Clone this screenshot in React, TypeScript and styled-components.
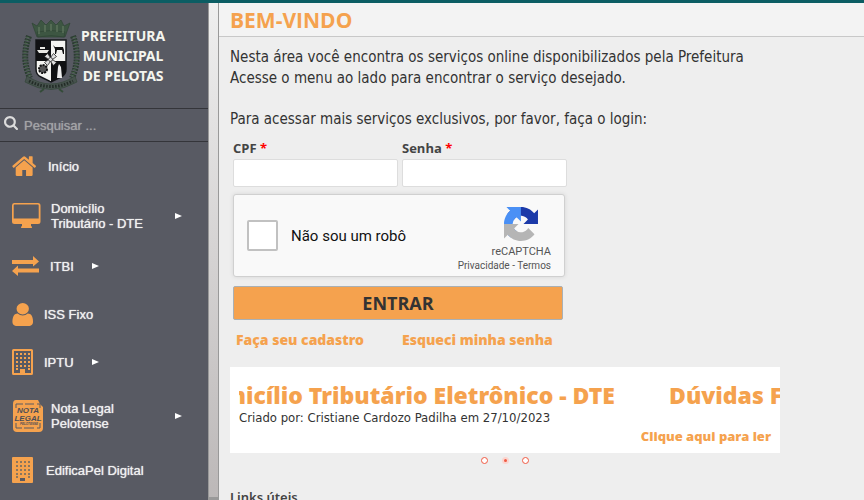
import React from "react";
import styled, { createGlobalStyle } from "styled-components";

const orange = "#f5a24e";
const slate = "#585a63";

const GlobalStyle = createGlobalStyle`
  * { box-sizing: border-box; }
  html, body, #root { height: 100%; }
  body {
    margin: 0;
    overflow: hidden;
    background: #eeeeee;
    color: #333333;
    font-family: "Open Sans", "Noto Sans", sans-serif;
  }
`;

const Page = styled.div`
  display: flex;
  height: 100vh;
  border-top: 3px solid #0b5d63;
`;

const Sidebar = styled.aside`
  flex: 0 0 208px;
  background: ${slate};
  font-family: "Liberation Sans", Arial, sans-serif;
  overflow: hidden;
`;

const Brand = styled.header`
  display: flex;
  height: 105px;
  padding: 16px 0 0 22px;
`;

const BrandName = styled.div`
  padding-top: 7px;
  color: #f4f5ee;
  font: 700 14px/20px "Noto Sans", "Open Sans", sans-serif;
  text-align: center;
`;

const Search = styled.label`
  display: flex;
  align-items: center;
  gap: 6px;
  height: 34px;
  padding-left: 4px;
  border-top: 1px solid #34353a;
  border-bottom: 1px solid #34353a;

  svg { margin-bottom: 5px; }
`;

const SearchInput = styled.input`
  width: 160px;
  padding: 0;
  border: 0;
  outline: 0;
  background: transparent;
  color: #ffffff;
  font: 13px "Liberation Sans", Arial, sans-serif;
  &::placeholder {
    color: #a2a3a6;
    opacity: 1;
    text-shadow: 0 0 1px #a2a3a6;
  }
`;

const Menu = styled.ul`
  margin: 0;
  padding: 0;
  list-style: none;
`;

const MenuLink = styled.a<{ $height: number }>`
  display: flex;
  align-items: center;
  height: ${(p) => p.$height}px;
  padding-left: 12px;
  color: #f0f0f0;
  font-size: 13px;
  line-height: 15px;
  text-decoration: none;
  text-shadow: 0 0 1px #f0f0f0;

  svg { flex: none; }
`;

const MenuText = styled.span<{ $wide?: boolean }>`
  width: ${(p) => (p.$wide ? "106px" : "auto")};
  margin: 0 18px 0 8px;
  white-space: pre-line;
`;

const Splitter = styled.div`
  flex: 0 0 11px;
  border: 1px solid #999999;
  border-width: 0 1px 3px;
  background: linear-gradient(#efefef, #bcb8b8);
`;

const Main = styled.main`
  flex: 1;
  min-width: 0;
  overflow: hidden;
`;

const TitleBar = styled.header`
  height: 34px;
  padding-left: 11px;
  border-bottom: 1px solid #c8c8c8;
  background: #f3f3f3;
`;

const Title = styled.h1`
  margin: 0;
  color: ${orange};
  font-size: 21px;
  font-weight: 700;
  line-height: 35px;
`;

const Content = styled.div`
  padding: 10px 11px 0;
`;

const Intro = styled.p`
  margin: 0 0 20px;
  font-family: "DejaVu Sans Condensed", "Noto Sans", sans-serif;
  font-size: 15px;
  line-height: 21px;
  &:nth-of-type(2) { margin-bottom: 8px; }
`;

const Form = styled.form`
  width: 334px;
  margin-left: 3px;
`;

const Fields = styled.div`
  display: grid;
  grid-template-columns: 165px 165px;
  gap: 4px;
`;

const Field = styled.label`
  font-size: 13px;
  font-weight: 700;
  line-height: 21px;
  color: #444444;
`;

const Required = styled.span`
  color: #ff0000;
`;

const TextInput = styled.input`
  display: block;
  width: 100%;
  height: 28px;
  border: 1px solid #dddddd;
  border-radius: 2px;
  background: #ffffff;
`;

const Captcha = styled.div`
  display: flex;
  justify-content: space-between;
  width: 332px;
  height: 83px;
  margin-top: 7px;
  padding: 0 13px;
  border: 1px solid #d0d0d0;
  border-radius: 3px;
  background: #f9f9f9;
  box-shadow: 0 0 4px rgba(0, 0, 0, 0.1);
  font-family: Roboto, sans-serif;
`;

const RobotLabel = styled.label`
  display: flex;
  align-items: center;
  gap: 13px;
  color: #111111;
  font-size: 15px;
`;

const Tick = styled.input`
  appearance: none;
  width: 31px;
  height: 31px;
  margin: 0;
  border: 2px solid #c1c1c1;
  border-radius: 2px;
  background: #ffffff;
`;

const CaptchaBrand = styled.div`
  display: flex;
  flex-direction: column;
  align-items: flex-end;
  padding-top: 12px;
  color: #555555;
  font-size: 11px;
  line-height: 14px;

  svg { margin: 0 13px 4px 0; }
`;

const CaptchaLinks = styled.div`
  font-size: 10px;
  line-height: 13px;
  a { color: inherit; text-decoration: none; }
`;

const Submit = styled.button`
  display: block;
  width: 330px;
  height: 34px;
  margin-top: 9px;
  padding: 0;
  border: 1px solid #a9b0b5;
  border-radius: 2px;
  background: ${orange};
  color: #333333;
  font: 700 18px "Open Sans", "Noto Sans", sans-serif;
`;

const AccountLinks = styled.nav`
  display: grid;
  grid-template-columns: 166px 166px;
  margin: 9px 0 16px 3px;
  font-size: 14px;
  line-height: 22px;
`;

const OrangeLink = styled.a`
  color: ${orange};
  font-family: "Noto Sans", "Open Sans", sans-serif;
  font-weight: 900;
  text-decoration: none;
  white-space: nowrap;
`;

const News = styled.section`
  width: 550px;
  height: 86px;
  padding: 14px 0 0 9px;
  background: #ffffff;
  overflow: hidden;
`;

const Ticker = styled.div`
  display: flex;
  gap: 54px;
  width: 541px;
  overflow: hidden;
`;

const Headline = styled.h2<{ $scrolled?: boolean }>`
  display: flex;
  flex: none;
  justify-content: flex-end;
  width: ${(p) => (p.$scrolled ? "376px" : "auto")};
  margin: 0;
  overflow: hidden;
  color: ${orange};
  font-family: "Noto Sans", "Open Sans", sans-serif;
  font-size: 23px;
  font-weight: 900;
  line-height: 29px;
  white-space: nowrap;
`;

const Byline = styled.p`
  margin: 0;
  font-family: "DejaVu Sans Condensed", "Noto Sans", sans-serif;
  font-size: 13px;
  line-height: 15px;
`;

const ReadMore = styled.div`
  padding-right: 9px;
  font-size: 13px;
  line-height: 22px;
  text-align: right;
`;

const Dots = styled.div`
  display: flex;
  justify-content: space-between;
  align-items: center;
  width: 48px;
  margin: 4px 0 0 251px;
`;

const Dot = styled.button<{ $active?: boolean }>`
  width: 7px;
  height: 7px;
  padding: 0;
  border: ${(p) => (p.$active ? "2px solid #fbd5cf" : "1px solid #f05a43")};
  border-radius: 50%;
  background: ${(p) => (p.$active ? "#f05a43" : "#ffffff")};
`;

const LinksTitle = styled.h3`
  margin: 23px 0 0;
  color: #444444;
  font-family: "Noto Sans", "Open Sans", sans-serif;
  font-size: 13px;
  font-weight: 600;
  line-height: 20px;
  white-space: nowrap;
`;

const Crest = () => (
  <svg width="59" height="74" viewBox="0 0 59 74" aria-label="Brasão de Pelotas">
    <g fill="#3d5642" stroke="#2f4535">
      <path strokeWidth=".7" d="M10 4l5 3 4-6 5 5 5-5 5 5 5-5 3 6 6-3-5 14H15z" />
      <path strokeWidth=".7" d="M15 13q14-3 28 0l-1 5q-13-3-26 0z" />
    </g>
    <path d="M17 8v7m6-9v7m6-8v7m6-6v7m6-6v7" stroke="#6c8069" fill="none" />
    <g fill="none" stroke="#2c3d32" strokeWidth="6" strokeDasharray="2 1">
      <path d="M7 17Q-1 39 8 59" />
      <path d="M51 17Q59 39 50 59" />
    </g>
    <path fill="none" stroke="#4c6850" strokeWidth="3" strokeDasharray="1 2" d="M6 18Q-1 39 8 58M52 18Q59 39 50 58" />
    <path d="M14 21h30v29q0 6-5 8l-10 5-10-5q-5-2-5-8z" fill="#f4f4f1" stroke="#15171a" strokeWidth="1.5" />
    <path d="M14 21h15v21H14zM29 42h15v8q0 6-5 8l-10 5z" fill="#101113" />
    <path d="M15 31h12l-2 3h-8zM18 30v-2h5v2z" fill="#e8e8e3" />
    <path d="M31 26l2 2h8l1 3v4h-1l-1-4h-5l-1 4h-1v-5z" fill="#111" />
    <circle cx="21" cy="50" r="4" fill="#555" stroke="#111" strokeWidth="2" strokeDasharray="2 1" />
    <path d="M37 45l2 3 1 11h-5l1-11z" fill="#eee" />
    <g transform="translate(28.5 40.5)" stroke="#222" strokeWidth=".8" fill="#ddd">
      <path d="M-6-3l3-3 3 4 3-4 3 3-4 3 4 3-3 3-3-4-3 4-3-3 4-3z" />
      <circle r="2" />
    </g>
    <path d="M5 57q24 16 48 0l2 6q-26 15-52 0z" fill="#46524d" stroke="#34463a" strokeWidth=".7" />
    <path d="M7 62q22 11 44 0" fill="none" stroke="#222b26" strokeDasharray="1.5 1.5" strokeWidth="3" />
    <path d="M22 70l-4 3m19-3l4 3" stroke="#344b38" strokeWidth="2" />
  </svg>
);

const SearchIcon = () => (
  <svg width="14" height="14" viewBox="64 128 1664 1664" fill="#dcdcdc" aria-hidden="true">
    <path d="M1216 832q0-185-131.500-316.500t-316.500-131.500-316.500 131.500-131.500 316.500 131.500 316.500 316.500 131.500 316.500-131.500 131.500-316.500zm512 832q0 52-38 90t-90 38q-54 0-90-38l-343-342q-179 124-399 124-143 0-273.500-55.500t-225-150-150-225-55.500-273.500 55.500-273.500 150-225 225-150 273.500-55.500 273.500 55.500 225 150 150 225 55.500 273.500q0 220-124 399l343 343q37 37 37 90z" />
  </svg>
);

const HomeIcon = () => (
  <svg width="28" height="20" viewBox="0 0 28 20" fill={orange} aria-hidden="true">
    <path transform="translate(-1 -3.600) scale(.0147 .0153)" d="M1472 992v480q0 26-19 45t-45 19h-384v-384h-256v384h-384q-26 0-45-19t-19-45v-480q0-1 .5-3t.5-3l575-474 575 474q1 2 1 6zm223-69l-62 74q-8 9-21 11h-3q-13 0-21-7l-692-577-692 577q-12 8-24 7-13-2-21-11l-62-74q-8-10-7-23.500t11-21.500l719-599q32-26 76-26t76 26l244 204v-195q0-14 9-23t23-9h192q14 0 23 9t9 23v408l219 182q10 8 11 21.500t-7 23.500z" />
  </svg>
);

const DesktopIcon = () => (
  <svg width="31" height="26" viewBox="0 0 31 26" fill={orange} aria-hidden="true">
    <path fillRule="evenodd" d="M2 0h24q2.500 0 2.500 2.500v16q0 2.500-2.500 2.500h-7v2q1 0 1 2H9q0-2 1-2v-2H2.500Q0 21 0 18.500v-16Q0 0 2 0zm.5 1.500q-.8 0-.8 1V15.500h25V2.500q0-1-1-1z" />
  </svg>
);

const ExchangeIcon = () => (
  <svg width="30" height="20" viewBox="0 0 30 20" fill={orange} aria-hidden="true">
    <path d="M0 4h21V0l6 5.500-6 5V8H0zM27 12.500H6V9.500L0 15l6 5v-3.500h21z" />
  </svg>
);

const UserIcon = () => (
  <svg width="24" height="23" viewBox="0 0 24 23" fill={orange} aria-hidden="true">
    <path transform="translate(-3.700 -1.900) scale(.0161 .0149)" d="M1536 1399q0 109-62.500 187t-150.500 78h-854q-88 0-150.500-78t-62.500-187q0-85 8.500-160.500t31.500-152 58.500-131 94-89 134.500-34.500q131 128 313 128t313-128q76 0 134.500 34.500t94 89 58.500 131 31.500 152 8.500 160.500zm-256-887q0 159-112.500 271.500t-271.500 112.500-271.500-112.500-112.500-271.500 112.500-271.500 271.500-112.500 271.500 112.500 112.500 271.500z" />
  </svg>
);

const windows = [4, 8, 12, 16]
  .flatMap((x) => [4, 8, 12, 16, 19].map((y) => [x, y]))
  .filter(([x, y]) => y < 19 || x === 4 || x === 16);

const BuildingOutlineIcon = () => (
  <svg width="24" height="26" viewBox="0 0 24 26" aria-hidden="true">
    <rect x="1" y="1" width="19" height="24" rx=".5" fill="none" stroke={orange} strokeWidth="2" />
    {windows.map(([x, y]) => (
      <rect key={`${x}-${y}`} x={x} y={y} width="2" height="2" fill={orange} />
    ))}
    <path d="M8 20h5v5H8z" fill={orange} />
  </svg>
);

const BuildingSolidIcon = () => (
  <svg width="26" height="26" viewBox="0 0 26 26" aria-hidden="true">
    <rect width="21" height="26" rx="1" fill={orange} />
    {windows.map(([x, y]) => (
      <rect key={`${x}-${y}`} x={x} y={y} width="2" height="2" fill="#8b765f" />
    ))}
    <path d="M8 21h5v3H8z" fill={slate} />
  </svg>
);

const NotaLegalIcon = () => (
  <svg width="31" height="32" viewBox="0 0 31 32" aria-hidden="true">
    <path d="M4 0h22l2 4 3 3v21q0 4-4 4H5q-4 0-4-4V4q0-4 3-4z" fill={orange} />
    <path d="M4 8V4h7m2 0h9m3 0h3v4M4 23v5h6m2 0h10m3 0h3v-5" fill="none" stroke={slate} strokeWidth="1" />
    <g fill="#4d4e55" fontFamily="Liberation Sans" fontWeight="700" fontStyle="italic" textAnchor="middle" style={{ textShadow: "none" }}>
      <text x="16" y="13" fontSize="8">NOTA</text>
      <text x="16" y="20.500" fontSize="8">LEGAL</text>
      <text x="17" y="25" fontSize="3">PELOTENSE</text>
    </g>
  </svg>
);

const Arrow = () => (
  <svg width="7" height="6" viewBox="0 0 7 6" fill="#ffffff" aria-hidden="true">
    <path d="M0 0l7 3-7 3z" />
  </svg>
);

const RecaptchaLogo = () => (
  <svg width="34" height="34" viewBox="0 0 64 64" aria-hidden="true">
    <path fill="#1c3aa9" d="M64 31.955l-.033-1.370V4.687l-7.160 7.160C50.948 4.674 42.033.093 32.050.093c-10.400 0-19.622 4.960-25.458 12.640l11.736 11.860a15.550 15.550 0 0 1 4.754-5.334c2.050-1.600 4.952-2.906 8.968-2.906.485 0 .860.057 1.135.163 4.976.393 9.288 3.140 11.828 7.124l-8.307 8.307L64 31.953" />
    <path fill="#4a90f5" d="M31.862.094l-1.370.033H4.594l7.160 7.160C4.580 13.147 0 22.060 0 32.046c0 10.400 4.960 19.622 12.640 25.458L24.500 45.768a15.550 15.550 0 0 1-5.334-4.754c-1.600-2.050-2.906-4.952-2.906-8.968 0-.485.057-.860.163-1.135.393-4.976 3.140-9.288 7.124-11.828l8.307 8.307L31.860.095" />
    <path fill="#b5b5b5" d="M.001 32.045l.033 1.370v25.898l7.160-7.160c5.860 7.173 14.774 11.754 24.760 11.754 10.400 0 19.622-4.960 25.458-12.640l-11.736-11.860a15.550 15.550 0 0 1-4.754 5.334c-2.050 1.600-4.952 2.906-8.968 2.906-.485 0-.860-.057-1.135-.163-4.976-.393-9.288-3.140-11.828-7.124l8.307-8.307L.001 32.048" />
  </svg>
);

const items = [
  { text: "Início", Icon: HomeIcon, height: 48 },
  { text: "Domicílio\nTributário - DTE", Icon: DesktopIcon, height: 52, arrow: true, wide: true },
  { text: "ITBI", Icon: ExchangeIcon, height: 48, arrow: true },
  { text: "ISS Fixo", Icon: UserIcon, height: 48 },
  { text: "IPTU", Icon: BuildingOutlineIcon, height: 48, arrow: true },
  { text: "Nota Legal\nPelotense", Icon: NotaLegalIcon, height: 60, arrow: true, wide: true },
  { text: "EdificaPel Digital", Icon: BuildingSolidIcon, height: 48 },
];

export default function App() {
  return (
    <>
      <GlobalStyle />
      <Page>
        <Sidebar>
          <Brand>
            <Crest />
            <BrandName>
              PREFEITURA
              <br />
              MUNICIPAL
              <br />
              DE PELOTAS
            </BrandName>
          </Brand>
          <Search>
            <SearchIcon />
            <SearchInput type="search" placeholder="Pesquisar ..." aria-label="Pesquisar" />
          </Search>
          <Menu>
            {items.map(({ text, Icon, height, arrow, wide }) => (
              <li key={text}>
                <MenuLink href="#" $height={height}>
                  <Icon />
                  <MenuText $wide={wide}>{text}</MenuText>
                  {arrow && <Arrow />}
                </MenuLink>
              </li>
            ))}
          </Menu>
        </Sidebar>
        <Splitter />
        <Main>
          <TitleBar>
            <Title>BEM-VINDO</Title>
          </TitleBar>
          <Content>
            <Intro>
              Nesta área você encontra os serviços online disponibilizados pela Prefeitura
              <br />
              Acesse o menu ao lado para encontrar o serviço desejado.
            </Intro>
            <Intro>Para acessar mais serviços exclusivos, por favor, faça o login:</Intro>
            <Form onSubmit={(e) => e.preventDefault()}>
              <Fields>
                <Field>
                  CPF <Required>*</Required>
                  <TextInput type="text" />
                </Field>
                <Field>
                  Senha <Required>*</Required>
                  <TextInput type="password" />
                </Field>
              </Fields>
              <Captcha>
                <RobotLabel>
                  <Tick type="checkbox" />
                  Não sou um robô
                </RobotLabel>
                <CaptchaBrand>
                  <RecaptchaLogo />
                  <span>reCAPTCHA</span>
                  <CaptchaLinks>
                    <a href="#">Privacidade</a> - <a href="#">Termos</a>
                  </CaptchaLinks>
                </CaptchaBrand>
              </Captcha>
              <Submit type="submit">ENTRAR</Submit>
              <AccountLinks>
                <OrangeLink href="#">Faça seu cadastro</OrangeLink>
                <OrangeLink href="#">Esqueci minha senha</OrangeLink>
              </AccountLinks>
            </Form>
            <News>
              <Ticker>
                <Headline $scrolled>Domicílio Tributário Eletrônico - DTE</Headline>
                <Headline>Dúvidas Frequentes</Headline>
              </Ticker>
              <Byline>Criado por: Cristiane Cardozo Padilha em 27/10/2023</Byline>
              <ReadMore>
                <OrangeLink href="#">Clique aqui para ler</OrangeLink>
              </ReadMore>
            </News>
            <Dots>
              <Dot aria-label="1" />
              <Dot aria-label="2" $active />
              <Dot aria-label="3" />
            </Dots>
            <LinksTitle>Links úteis</LinksTitle>
          </Content>
        </Main>
      </Page>
    </>
  );
}
